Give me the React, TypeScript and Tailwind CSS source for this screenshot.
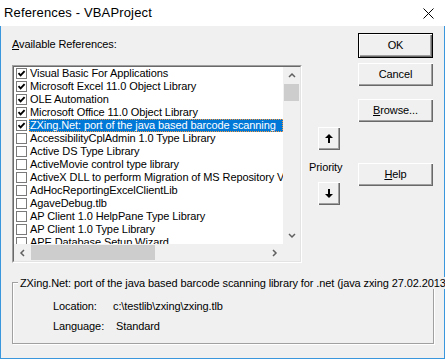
import React from "react";

const refs = [
  { label: "Visual Basic For Applications", checked: true },
  { label: "Microsoft Excel 11.0 Object Library", checked: true },
  { label: "OLE Automation", checked: true },
  { label: "Microsoft Office 11.0 Object Library", checked: true },
  { label: "ZXing.Net: port of the java based barcode scanning", checked: true, selected: true },
  { label: "AccessibilityCplAdmin 1.0 Type Library", checked: false },
  { label: "Active DS Type Library", checked: false },
  { label: "ActiveMovie control type library", checked: false },
  { label: "ActiveX DLL to perform Migration of MS Repository V1.0 to V2.0", checked: false },
  { label: "AdHocReportingExcelClientLib", checked: false },
  { label: "AgaveDebug.tlb", checked: false },
  { label: "AP Client 1.0 HelpPane Type Library", checked: false },
  { label: "AP Client 1.0 Type Library", checked: false },
  { label: "APE Database Setup Wizard", checked: false },
];

function CheckBox({ checked }: { checked: boolean }) {
  return (
    <div className="flex h-[11px] w-[11px] shrink-0 items-center justify-center border border-[#7a7a7a] bg-white">
      {checked && (
        <svg width="9" height="9" viewBox="0 0 9 9">
          <path d="M1.5 4.2 L3.6 6.3 L7.6 2.2" fill="none" stroke="#000" strokeWidth="1.9" />
        </svg>
      )}
    </div>
  );
}

function Chevron({ dir }: { dir: "up" | "down" | "left" | "right" }) {
  const d = {
    up: "M1 5 L4 2 L7 5",
    down: "M1 2 L4 5 L7 2",
    left: "M5 1 L2 4 L5 7",
    right: "M2 1 L5 4 L2 7",
  }[dir];
  const vertical = dir === "up" || dir === "down";
  return (
    <svg width={vertical ? 8 : 7} height={vertical ? 7 : 8} viewBox={vertical ? "0 0 8 7" : "0 0 7 8"}>
      <path d={d} fill="none" stroke="#606060" strokeWidth="1.5" />
    </svg>
  );
}

function Button({ children, isDefault, className }: { children: React.ReactNode; isDefault?: boolean; className: string }) {
  return (
    <div
      className={
        "flex items-center justify-center bg-[#f0f0f0] shadow-[inset_1px_1px_0_#ffffff,inset_-1px_-1px_0_#696969,inset_-2px_-2px_0_#a0a0a0] " +
        (isDefault ? "border border-[#000] " : "") +
        className
      }
    >
      {children}
    </div>
  );
}

function ListBox() {
  return (
    <div className="mt-[15px] h-[198px] border border-t-[#a0a0a0] border-l-[#a0a0a0] border-r-white border-b-white">
      <div className="h-full border border-t-[#696969] border-l-[#696969] border-r-[#e3e3e3] border-b-[#e3e3e3]">
        <div className="grid h-full grid-cols-[1fr_17px] grid-rows-[1fr_17px] bg-white">
          <div className="overflow-hidden">
            {refs.map((r) => (
              <div key={r.label} className="flex h-[13px] items-center pl-[2px]">
                <CheckBox checked={r.checked} />
                <div
                  className={
                    r.selected
                      ? "ml-[2px] flex h-[13px] flex-1 items-center whitespace-nowrap border border-dotted border-[#ff9a3c] bg-[#0078d7] text-white"
                      : "ml-[2px] flex h-[13px] flex-1 items-center whitespace-nowrap pl-[1px]"
                  }
                >
                  {r.label}
                </div>
              </div>
            ))}
          </div>
          <div className="flex flex-col bg-[#f0f0f0]">
            <div className="flex h-[17px] items-center justify-center">
              <Chevron dir="up" />
            </div>
            <div className="mx-[1px] h-[17px] bg-[#cdcdcd]" />
            <div className="flex-1" />
            <div className="flex h-[17px] items-center justify-center">
              <Chevron dir="down" />
            </div>
          </div>
          <div className="flex bg-[#f0f0f0]">
            <div className="flex w-[17px] items-center justify-center">
              <Chevron dir="left" />
            </div>
            <div className="my-[1px] w-[124px] bg-[#cdcdcd]" />
            <div className="flex-1" />
            <div className="flex w-[17px] items-center justify-center">
              <Chevron dir="right" />
            </div>
          </div>
          <div className="bg-[#f0f0f0]" />
        </div>
      </div>
    </div>
  );
}

function Arrow({ up }: { up?: boolean }) {
  return (
    <svg width="8" height="9" viewBox="0 0 8 9">
      <polygon
        points={up ? "4,0 8,4 5,4 5,9 3,9 3,4 0,4" : "4,9 8,5 5,5 5,0 3,0 3,5 0,5"}
        fill="#000"
      />
    </svg>
  );
}

export default function App() {
  return (
    <div className="flex h-[359px] w-[445px] flex-col overflow-hidden bg-[#f0f0f0] font-['Liberation_Sans',Arial,sans-serif] text-[11px] tracking-[-0.1px] text-black">
      {/* title bar */}
      <div className="flex h-[26px] shrink-0 items-center justify-between bg-white pl-[4px] pr-[11px]">
        <span className="text-[13px] tracking-[0.15px]">References - VBAProject</span>
        <svg width="11" height="11" viewBox="0 0 11 11">
          <path d="M0.5 0.5 L10.5 10.5 M10.5 0.5 L0.5 10.5" stroke="#000" strokeWidth="1" />
        </svg>
      </div>

      <div className="flex flex-1 flex-col border-x border-b border-[#3a96dd] pl-[11px]">
        <div className="flex">
          <div className="flex w-[290px] flex-col">
            <div className="mt-[12px] leading-[12px]">
              <span className="underline">A</span>vailable References:
            </div>
            <ListBox />
          </div>

          <div className="flex w-[56px] flex-col">
            <Button className="ml-[16px] mt-[101px] h-[23px] w-[22px]">
              <Arrow up />
            </Button>
            <div className="ml-[7px] mt-[11px] leading-[12px]">Priority</div>
            <Button className="ml-[16px] mt-[9px] h-[23px] w-[22px]">
              <Arrow />
            </Button>
          </div>

          <div className="flex w-[75px] flex-col">
            <Button isDefault className="mt-[7px] h-[25px]">OK</Button>
            <Button className="mt-[5px] h-[23px]">Cancel</Button>
            <Button className="mt-[13px] h-[23px]">
              <span>
                <span className="underline">B</span>rowse...
              </span>
            </Button>
            <Button className="mt-[41px] h-[23px]">
              <span>
                <span className="underline">H</span>elp
              </span>
            </Button>
          </div>
        </div>

        <div className="relative mt-[19px] h-[62px] w-[422px] border border-[#a0a0a0] shadow-[1px_1px_0_#ffffff,inset_1px_1px_0_#ffffff]">
          <div className="absolute left-[5px] top-[-6px] whitespace-nowrap bg-[#f0f0f0] px-[2px] leading-[12px]">
            ZXing.Net: port of the java based barcode scanning library for .net (java zxing 27.02.2013)
          </div>
          <div className="flex flex-col gap-[8px] pl-[40px] pt-[17px] leading-[12px]">
            <div className="flex">
              <span className="w-[60px]">Location:</span>
              <span>c:\testlib\zxing\zxing.tlb</span>
            </div>
            <div className="flex">
              <span className="w-[60px]">Language:</span>
              <span className="ml-[3px]">Standard</span>
            </div>
          </div>
        </div>
      </div>
    </div>
  );
}
